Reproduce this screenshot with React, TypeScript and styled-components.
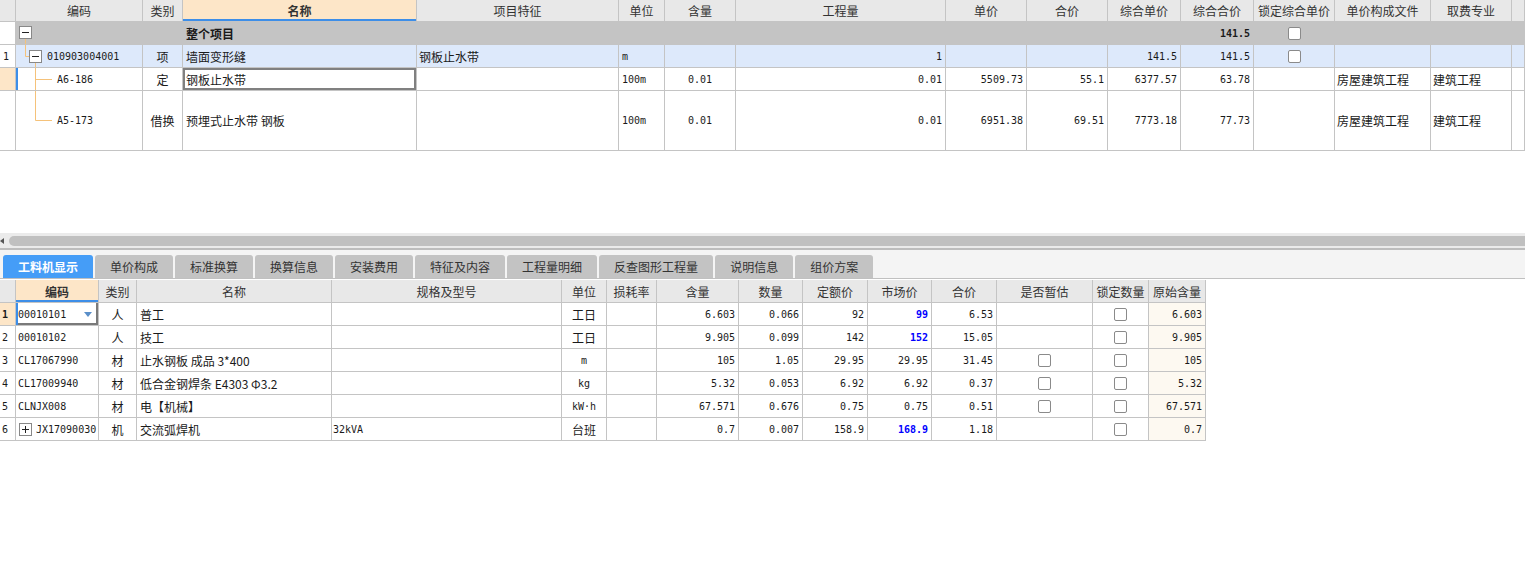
import React from 'react';
import styled, { createGlobalStyle } from 'styled-components';

const CJK = `"Noto Sans CJK SC", "Noto Sans", sans-serif`;
const MONO = `"DejaVu Sans Mono", "Noto Sans CJK SC", monospace`;
const LINE = '#c4c4c4';
const BLUE = '#3d8ee8';
const PEACH = '#fde6c8';
const TREE = '#f5c27a';

const GlobalStyle = createGlobalStyle`
  html, body { margin: 0; padding: 0; background: #fff; }
  body { font-family: ${CJK}; font-size: 12px; color: #1a1a1a; }
`;

type Align = 'left' | 'center' | 'right';
const J: Record<Align, string> = { left: 'flex-start', center: 'center', right: 'flex-end' };

const Page = styled.div`
  width: 1525px;
  height: 566px;
  display: flex;
  flex-direction: column;
  overflow: hidden;
  background: #fff;
`;

const TopPane = styled.div`
  height: 233px;
  flex: none;
`;

const TopRow = styled.div<{ $h: number; $bg?: string }>`
  display: grid;
  grid-template-columns: 16px 127px 40px 234px 202px 46px 71px 210px 81px 81px 73px 73px 81px 96px 81px 13px;
  height: ${p => p.$h}px;
  background: ${p => p.$bg ?? '#fff'};
`;

const BottomRow = styled.div<{ $h: number }>`
  display: grid;
  grid-template-columns: 16px 83px 38px 195px 230px 45px 50px 82px 64px 65px 64px 65px 96px 56px 57px;
  width: 1206px;
  height: ${p => p.$h}px;
  background: #fff;
`;

interface CellProps {
  $align?: Align;
  $mono?: boolean;
  $bold?: boolean;
  $color?: string;
  $bg?: string;
  $pad?: number;
  $shadow?: string;
}

const Cell = styled.div<CellProps>`
  box-sizing: border-box;
  min-width: 0;
  display: flex;
  align-items: center;
  justify-content: ${p => J[p.$align ?? 'left']};
  padding: 0 ${p => p.$pad ?? 2}px;
  border-right: 1px solid ${LINE};
  border-bottom: 1px solid ${LINE};
  background: ${p => p.$bg ?? 'transparent'};
  font-family: ${p => (p.$mono ? MONO : CJK)};
  font-size: ${p => (p.$mono ? 10 : 12)}px;
  font-weight: ${p => (p.$bold ? 700 : 400)};
  color: ${p => p.$color ?? '#1a1a1a'};
  white-space: nowrap;
  overflow: hidden;
  box-shadow: ${p => p.$shadow ?? 'none'};
`;

const HeadCell = styled.div<{ $active?: boolean }>`
  box-sizing: border-box;
  min-width: 0;
  display: flex;
  align-items: center;
  justify-content: center;
  border-right: 1px solid ${LINE};
  border-bottom: 1px solid ${LINE};
  background: ${p => (p.$active ? PEACH : '#e8e8e8')};
  box-shadow: ${p => (p.$active ? `inset 0 -2px 0 ${BLUE}` : 'none')};
  font-family: ${CJK};
  font-size: 12px;
  font-weight: ${p => (p.$active ? 700 : 400)};
  color: #333;
  white-space: nowrap;
  overflow: hidden;
`;

const CodeText = styled.span`
  margin-left: 2px;
  font-family: ${MONO};
  font-size: 10px;
`;

const Check = styled.span`
  display: inline-block;
  width: 13px;
  height: 13px;
  box-sizing: border-box;
  border: 1px solid #8a8a8a;
  border-radius: 2px;
  background: #fff;
`;

const DropArrow = styled.span`
  margin-left: auto;
  margin-right: 4px;
  width: 0;
  height: 0;
  border-left: 4px solid transparent;
  border-right: 4px solid transparent;
  border-top: 5px solid #5a8fc9;
`;

const TreeSvg = styled.svg`
  flex: none;
  display: block;
`;

const HScroll = styled.div`
  flex: none;
  height: 17px;
  box-sizing: border-box;
  background: #ebebeb;
  border-bottom: 2px solid #bdbdbd;
  padding: 3px 0 2px 0;
  display: flex;
  align-items: center;
`;

const ArrowLeft = styled.div`
  width: 0;
  height: 0;
  border-top: 3px solid transparent;
  border-bottom: 3px solid transparent;
  border-right: 4px solid #555;
  margin-right: 5px;
`;

const Thumb = styled.div`
  flex: 1;
  height: 10px;
  background: #c0c0c0;
  border-radius: 5px 0 0 5px;
`;

const TabStrip = styled.div`
  flex: none;
  height: 29px;
  box-sizing: border-box;
  background: #f4f4f4;
  border-bottom: 1px solid #c0c0c0;
  display: flex;
  align-items: flex-end;
  gap: 2px;
  padding-left: 3px;
`;

const Tab = styled.div<{ $active?: boolean }>`
  height: 23px;
  padding: 0 15px;
  display: flex;
  align-items: center;
  border-radius: 3px 3px 0 0;
  background: ${p => (p.$active ? '#459df7' : '#c3c3c3')};
  color: ${p => (p.$active ? '#fff' : '#333')};
  font-weight: ${p => (p.$active ? 700 : 400)};
  font-family: ${CJK};
  font-size: 12px;
`;

const BottomPane = styled.div`
  flex: none;
  margin-top: 1px;
  display: flex;
  flex-direction: column;
`;

function Box({ x, y, plus }: { x: number; y: number; plus?: boolean }) {
  return (
    <g>
      <rect x={x + 0.5} y={y + 0.5} width={12} height={12} fill="#fff" stroke="#888" />
      <line x1={x + 3} y1={y + 6.5} x2={x + 10} y2={y + 6.5} stroke="#222" />
      {plus && <line x1={x + 6.5} y1={y + 3} x2={x + 6.5} y2={y + 10} stroke="#222" />}
    </g>
  );
}

function Tree({ kind, h }: { kind: 'root' | 'item' | 'leaf' | 'last'; h: number }) {
  const mid = Math.floor(h / 2) + 0.5;
  if (kind === 'root') {
    return (
      <TreeSvg width={17} height={h}>
        <line x1={9.5} y1={16} x2={9.5} y2={h} stroke={TREE} />
        <Box x={3} y={4} />
      </TreeSvg>
    );
  }
  if (kind === 'item') {
    return (
      <TreeSvg width={29} height={h}>
        <line x1={9.5} y1={0} x2={9.5} y2={mid} stroke={TREE} />
        <line x1={9.5} y1={mid} x2={13} y2={mid} stroke={TREE} />
        <line x1={19.5} y1={16} x2={19.5} y2={h} stroke={TREE} />
        <Box x={13} y={mid - 6.5} />
      </TreeSvg>
    );
  }
  const m = kind === 'leaf' ? mid : Math.floor(h / 2) + 0.5;
  return (
    <TreeSvg width={39} height={h}>
      <line x1={19.5} y1={0} x2={19.5} y2={kind === 'leaf' ? h : m} stroke={TREE} />
      <line x1={19.5} y1={m} x2={36} y2={m} stroke={TREE} />
    </TreeSvg>
  );
}

type Spec = {
  t?: React.ReactNode;
  a?: Align;
  m?: boolean;
  b?: boolean;
  c?: string;
  bg?: string;
  sh?: string;
  p?: number;
};

const topHeads = ['', '编码', '类别', '名称', '项目特征', '单位', '含量', '工程量', '单价', '合价', '综合单价', '综合合价', '锁定综合单价', '单价构成文件', '取费专业', ''];

const R = (t: string, extra: Partial<Spec> = {}): Spec => ({ t, a: 'right', m: true, p: 3, ...extra });
const Lm = (t: string): Spec => ({ t, a: 'left', m: true, p: 3 });
const Ct = (t: string): Spec => ({ t, a: 'center' });
const Tx = (t: string, extra: Partial<Spec> = {}): Spec => ({ t, a: 'left', ...extra });
const E: Spec = {};
const CB: Spec = { t: <Check />, a: 'center' };

const topRows: { h: number; bg?: string; cells: Spec[] }[] = [
  {
    h: 23,
    bg: '#c4c4c4',
    cells: [
      { bg: '#fff' },
      { t: <Tree kind="root" h={22} />, p: 0 },
      E,
      Tx('整个项目', { b: true, p: 3 }),
      E, E, E, E, E, E, E,
      R('141.5', { b: true }),
      CB,
      E, E, E,
    ],
  },
  {
    h: 23,
    bg: '#dde9fb',
    cells: [
      { t: '1', m: true, bg: '#fff', p: 3 },
      { t: <><Tree kind="item" h={22} /><CodeText>010903004001</CodeText></>, p: 0 },
      Ct('项'),
      Tx('墙面变形缝', { p: 3 }),
      Tx('钢板止水带'),
      Lm('m'),
      E,
      R('1'),
      E, E,
      R('141.5'),
      R('141.5'),
      CB,
      E, E, E,
    ],
  },
  {
    h: 23,
    cells: [
      { bg: PEACH },
      { t: <><Tree kind="leaf" h={22} /><CodeText>A6-186</CodeText></>, p: 0, sh: `inset 2px 0 0 ${BLUE}` },
      Ct('定'),
      Tx('钢板止水带', { p: 3, sh: 'inset 0 0 0 2px #808080' }),
      E,
      Lm('100m'),
      { t: '0.01', a: 'center', m: true },
      R('0.01'),
      R('5509.73'),
      R('55.1'),
      R('6377.57'),
      R('63.78'),
      E,
      Tx('房屋建筑工程'),
      Tx('建筑工程'),
      E,
    ],
  },
  {
    h: 60,
    cells: [
      E,
      { t: <><Tree kind="last" h={59} /><CodeText>A5-173</CodeText></>, p: 0 },
      Ct('借换'),
      Tx('预埋式止水带 钢板', { p: 3 }),
      E,
      Lm('100m'),
      { t: '0.01', a: 'center', m: true },
      R('0.01'),
      R('6951.38'),
      R('69.51'),
      R('7773.18'),
      R('77.73'),
      E,
      Tx('房屋建筑工程'),
      Tx('建筑工程'),
      E,
    ],
  },
];

const tabs = ['工料机显示', '单价构成', '标准换算', '换算信息', '安装费用', '特征及内容', '工程量明细', '反查图形工程量', '说明信息', '组价方案'];

const bottomHeads = ['', '编码', '类别', '名称', '规格及型号', '单位', '损耗率', '含量', '数量', '定额价', '市场价', '合价', '是否暂估', '锁定数量', '原始含量'];

const ORIG = '#fdf9f1';
const BLUE_NUM = '#0000ff';

type BRow = {
  n: string;
  code: string;
  kind: string;
  name: string;
  spec: string;
  unit: string;
  unitMono: boolean;
  qty: string;
  num: string;
  quota: string;
  market: string;
  marketBlue: boolean;
  total: string;
  est: boolean;
  orig: string;
};

const bottomData: BRow[] = [
  { n: '1', code: '00010101', kind: '人', name: '普工', spec: '', unit: '工日', unitMono: false, qty: '6.603', num: '0.066', quota: '92', market: '99', marketBlue: true, total: '6.53', est: false, orig: '6.603' },
  { n: '2', code: '00010102', kind: '人', name: '技工', spec: '', unit: '工日', unitMono: false, qty: '9.905', num: '0.099', quota: '142', market: '152', marketBlue: true, total: '15.05', est: false, orig: '9.905' },
  { n: '3', code: 'CL17067990', kind: '材', name: '止水钢板 成品 3*400', spec: '', unit: 'm', unitMono: true, qty: '105', num: '1.05', quota: '29.95', market: '29.95', marketBlue: false, total: '31.45', est: true, orig: '105' },
  { n: '4', code: 'CL17009940', kind: '材', name: '低合金钢焊条 E4303 Φ3.2', spec: '', unit: 'kg', unitMono: true, qty: '5.32', num: '0.053', quota: '6.92', market: '6.92', marketBlue: false, total: '0.37', est: true, orig: '5.32' },
  { n: '5', code: 'CLNJX008', kind: '材', name: '电【机械】', spec: '', unit: 'kW·h', unitMono: true, qty: '67.571', num: '0.676', quota: '0.75', market: '0.75', marketBlue: false, total: '0.51', est: true, orig: '67.571' },
  { n: '6', code: 'JX17090030', kind: '机', name: '交流弧焊机', spec: '32kVA', unit: '台班', unitMono: false, qty: '0.7', num: '0.007', quota: '158.9', market: '168.9', marketBlue: true, total: '1.18', est: false, orig: '0.7' },
];

function CodeCell({ row, index }: { row: BRow; index: number }) {
  if (index === 0) {
    return (
      <Cell $mono $pad={2} $shadow={`inset 2px 0 0 ${BLUE}, inset -2px -2px 0 #7a7a7a`}>
        {row.code}
        <DropArrow />
      </Cell>
    );
  }
  if (row.n === '6') {
    return (
      <Cell $mono $pad={0}>
        <TreeSvg width={18} height={22}>
          <Box x={3} y={5} plus />
        </TreeSvg>
        <CodeText>{row.code}</CodeText>
      </Cell>
    );
  }
  return (
    <Cell $mono $pad={2}>
      {row.code}
    </Cell>
  );
}

export default function App() {
  return (
    <>
      <GlobalStyle />
      <Page>
        <TopPane>
          <TopRow $h={22}>
            {topHeads.map((h, i) => (
              <HeadCell key={i} $active={i === 3}>
                {h}
              </HeadCell>
            ))}
          </TopRow>
          {topRows.map((row, ri) => (
            <TopRow key={ri} $h={row.h} $bg={row.bg}>
              {row.cells.map((c, ci) => (
                <Cell
                  key={ci}
                  $align={c.a}
                  $mono={c.m}
                  $bold={c.b}
                  $color={c.c}
                  $bg={c.bg}
                  $pad={c.p}
                  $shadow={c.sh}
                >
                  {c.t}
                </Cell>
              ))}
            </TopRow>
          ))}
        </TopPane>

        <HScroll>
          <ArrowLeft />
          <Thumb />
        </HScroll>

        <TabStrip>
          {tabs.map((t, i) => (
            <Tab key={t} $active={i === 0}>
              {t}
            </Tab>
          ))}
        </TabStrip>

        <BottomPane>
          <BottomRow $h={23}>
            {bottomHeads.map((h, i) => (
              <HeadCell key={i} $active={i === 1}>
                {h}
              </HeadCell>
            ))}
          </BottomRow>
          {bottomData.map((r, i) => (
            <BottomRow key={r.n} $h={23}>
              <Cell $mono $pad={2} $bold={i === 0} $bg={i === 0 ? PEACH : undefined}>
                {r.n}
              </Cell>
              <CodeCell row={r} index={i} />
              <Cell $align="center">{r.kind}</Cell>
              <Cell $pad={3}>{r.name}</Cell>
              <Cell $mono $pad={1}>{r.spec}</Cell>
              <Cell $align="center" $mono={r.unitMono}>{r.unit}</Cell>
              <Cell />
              <Cell $align="right" $mono $pad={3}>{r.qty}</Cell>
              <Cell $align="right" $mono $pad={3}>{r.num}</Cell>
              <Cell $align="right" $mono $pad={3}>{r.quota}</Cell>
              <Cell
                $align="right"
                $mono
                $pad={3}
                $bold={r.marketBlue}
                $color={r.marketBlue ? BLUE_NUM : undefined}
              >
                {r.market}
              </Cell>
              <Cell $align="right" $mono $pad={3}>{r.total}</Cell>
              <Cell $align="center">{r.est ? <Check /> : null}</Cell>
              <Cell $align="center"><Check /></Cell>
              <Cell $align="right" $mono $pad={3} $bg={ORIG}>{r.orig}</Cell>
            </BottomRow>
          ))}
        </BottomPane>
      </Page>
    </>
  );
}
